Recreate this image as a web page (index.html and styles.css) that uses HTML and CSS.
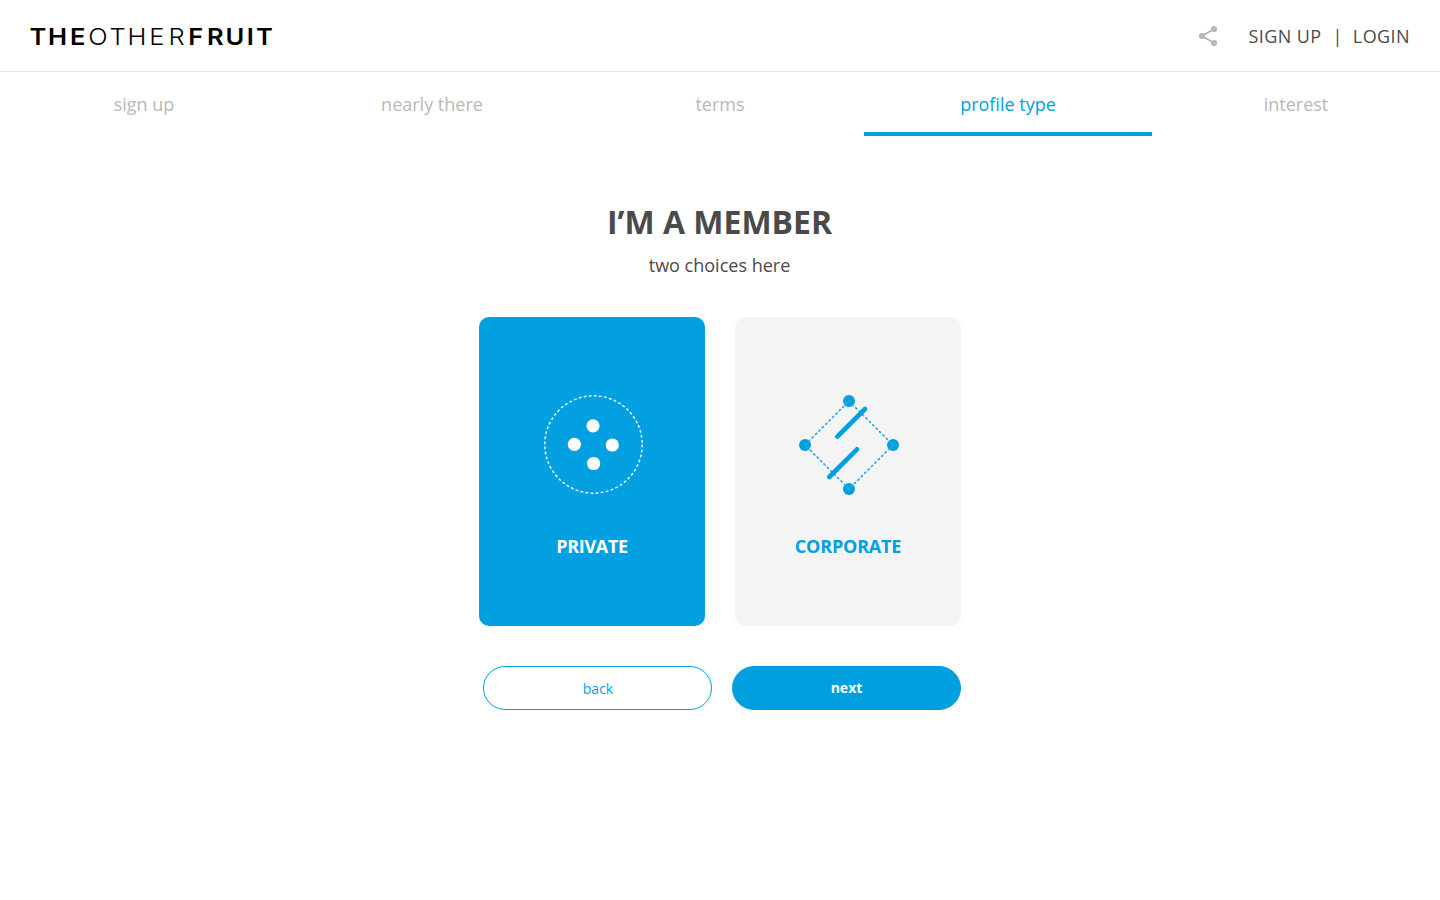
FILE: index.html
```html
<!DOCTYPE html>
<html lang="en">
<head>
<meta charset="utf-8">
<title>The Other Fruit</title>
<link rel="stylesheet" href="styles.css">
</head>
<body>
<header class="header">
  <svg class="logo" width="250" height="30" viewBox="26 21 250 30">
    <g transform="scale(1.09 1)">
      <text class="logo-bold" y="45" x="34.8 52.8 71.3">THE</text>
      <text class="logo-light" y="45" x="89.9 107.8 125.7 144 162">OTHER</text>
      <text class="logo-bold" y="45" x="179.6 197.5 215.6 229.6 242.7">FRUIT</text>
    </g>
  </svg>
  <div class="account">
    <svg class="share" width="20" height="22" viewBox="0 0 20 22">
      <path d="M16 4 4 11l12 7" fill="none" stroke="#b8b8b8" stroke-width="2"/>
      <g fill="#b8b8b8"><circle cx="16" cy="4" r="3.1"/><circle cx="4" cy="11" r="3.1"/><circle cx="16" cy="18" r="3.1"/></g>
    </svg>
    <a class="link">SIGN UP</a><span class="divider">|</span><a class="link">LOGIN</a>
  </div>
</header>
<nav class="steps">
  <a class="step">sign up</a>
  <a class="step">nearly there</a>
  <a class="step">terms</a>
  <a class="step active">profile type</a>
  <a class="step">interest</a>
</nav>
<main class="content">
  <h1 class="title">I’M A MEMBER</h1>
  <p class="subtitle">two choices here</p>
  <div class="cards">
    <div class="card selected">
      <svg class="icon" width="130" height="130" viewBox="529 380 130 130">
        <circle cx="593.5" cy="444.5" r="48.7" fill="none" stroke="#fff" stroke-width="1.4" stroke-dasharray="2.8 2.3"/>
        <g fill="#fff"><circle cx="593" cy="425.8" r="6.6"/><circle cx="574.4" cy="444.4" r="6.6"/><circle cx="612.3" cy="445" r="6.6"/><circle cx="593.6" cy="463.5" r="6.6"/></g>
      </svg>
      <span class="label">PRIVATE</span>
    </div>
    <div class="card">
      <svg class="icon" width="130" height="130" viewBox="785 380 130 130">
        <g fill="#009fe0"><circle cx="849" cy="401" r="6"/><circle cx="805" cy="445" r="6"/><circle cx="893" cy="445" r="6"/><circle cx="849" cy="489" r="6"/></g>
        <path d="M849 401 893 445 849 489 805 445Z" fill="none" stroke="#26ade4" stroke-width="1.7" stroke-linecap="round" stroke-dasharray="1.4 3.4"/>
        <path d="M865 409 837.3 436.7M857 449.3 829.3 477" fill="none" stroke="#009fe0" stroke-width="4.6" stroke-linecap="round"/>
      </svg>
      <span class="label">CORPORATE</span>
    </div>
  </div>
  <div class="actions">
    <button class="button back">back</button>
    <button class="button next">next</button>
  </div>
</main>
</body>
</html>
```
FILE: styles.css
```css
* { box-sizing: border-box; }
body { margin: 0; background: #fff; color: #4a4a4a; font-family: "Open Sans", sans-serif; }
.header { height: 72px; border-bottom: 1px solid #e1e1e1; padding: 0 30px 0 26px; display: flex; align-items: center; justify-content: space-between; }
.logo { display: block; }
.logo text { font-family: Inter, sans-serif; font-size: 23.4px; text-anchor: middle; fill: #000; }
.logo .logo-bold { font-weight: 600; }
.logo .logo-light { font-weight: 300; }
.account { display: flex; align-items: center; font-size: 18px; line-height: 26px; letter-spacing: 0.42px; }
.share { margin-right: 30px; }
.divider { margin: 0 10px 0 11px; }
.steps { height: 64px; display: grid; grid-template-columns: repeat(5, 1fr); }
.step { text-align: center; font-size: 18px; line-height: 26px; padding-top: 19px; color: #b8b8b8; }
.step.active { color: #009fe0; border-bottom: 4px solid #009fe0; }
.content { width: 482px; margin: 0 auto; display: flex; flex-direction: column; padding-top: 63px; }
.title { margin: 0 1px 0 0; font-size: 32px; line-height: 46px; text-align: center; font-weight: 700; }
.subtitle { margin: 7px 1px 0 0; font-size: 18px; line-height: 26px; text-align: center; }
.cards { margin-top: 39px; display: flex; justify-content: space-between; }
.card { width: 226px; height: 309px; border-radius: 10px; background: #f4f4f4; color: #009fe0; display: flex; flex-direction: column; align-items: center; padding-top: 63px; }
.card.selected { background: #03a0e1; color: #fff; }
.icon { display: block; margin-left: 3px; }
.label { margin-top: 23px; font-size: 18px; line-height: 26px; font-weight: 700; letter-spacing: -0.2px; }
.selected .label { letter-spacing: -0.3px; }
.actions { margin: 40px 0 0 4px; display: flex; justify-content: space-between; }
.button { width: 229px; height: 44px; border-radius: 22px; border: 1px solid #009fe0; padding: 0; font: 14px/20px "Open Sans", sans-serif; }
.back { background: #fff; color: #009fe0; padding: 2px 0 0 1px; }
.next { background: #009fe0; color: #fff; font-weight: 700; }
```
